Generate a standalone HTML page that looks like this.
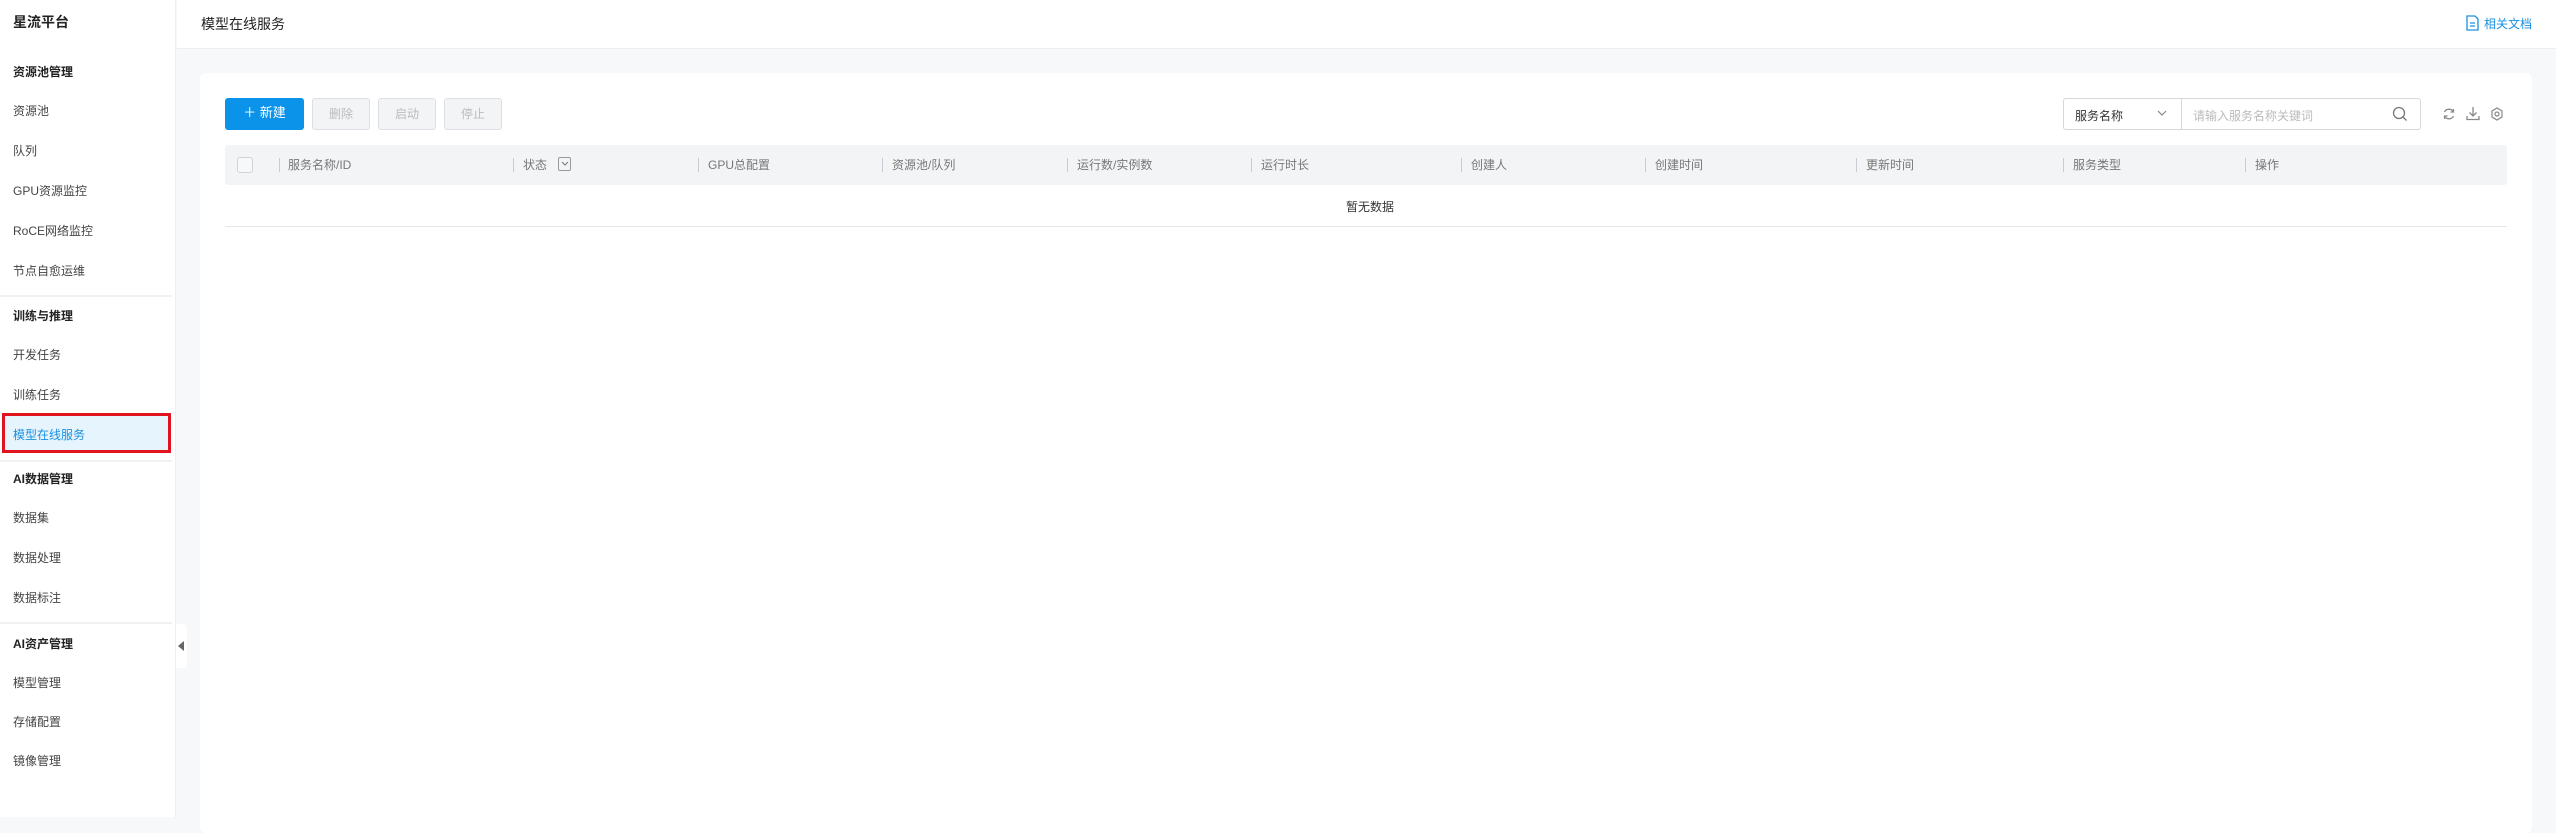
<!DOCTYPE html>
<html><head><meta charset="utf-8"><style>
*{margin:0;padding:0;box-sizing:border-box}
body{width:2556px;height:817px;overflow:hidden;background:#f7f8fa;font-family:"Liberation Sans","Noto Sans CJK SC",sans-serif;color:#333;position:relative;font-size:12px}
.abs{position:absolute}
#side{left:0;top:0;width:176px;height:817px;background:#fff;border-right:1px solid #eceef1}
.si{position:absolute;left:13px;font-size:12px;color:#444;line-height:16px}
.sh{font-weight:bold;color:#222}
.div{position:absolute;left:0;width:172px;height:2px;background:#f0f1f3}
#hdr{left:177px;top:0;width:2379px;height:49px;background:#fff;border-bottom:1px solid #eceef1}
#card{left:200px;top:73px;width:2332px;height:760px;background:#fff;border-radius:6px}
.btn{position:absolute;top:98px;height:32px;border-radius:3px;font-size:12px;line-height:30px;text-align:center}
.dis{background:#f3f4f6;border:1px solid #dcdfe4;color:#bbb}
.th{position:absolute;top:145px;left:225px;width:2282px;height:40px;background:#f3f4f6;border-radius:3px}
.col{position:absolute;top:158px;font-size:12px;color:#777;line-height:14px}
.sep{position:absolute;top:158px;width:1px;height:14px;background:#c8ccd2}
</style></head><body>
<div id="side" class="abs">
<div class="si sh" style="top:14px;font-size:14px">星流平台</div>
<div class="si sh" style="top:64px">资源池管理</div>
<div class="si" style="top:103px">资源池</div>
<div class="si" style="top:143px">队列</div>
<div class="si" style="top:183px">GPU资源监控</div>
<div class="si" style="top:223px">RoCE网络监控</div>
<div class="si" style="top:263px">节点自愈运维</div>
<div class="div" style="top:295px"></div>
<div class="si sh" style="top:308px">训练与推理</div>
<div class="si" style="top:347px">开发任务</div>
<div class="si" style="top:387px">训练任务</div>
<div class="abs" style="left:2px;top:413px;width:169px;height:40px;background:#e6f4fd;border:3px solid #e0141e"></div>
<div class="si" style="top:427px;color:#1a90e0">模型在线服务</div>
<div class="div" style="top:460px"></div>
<div class="si sh" style="top:471px">AI数据管理</div>
<div class="si" style="top:510px">数据集</div>
<div class="si" style="top:550px">数据处理</div>
<div class="si" style="top:590px">数据标注</div>
<div class="div" style="top:622px"></div>
<div class="si sh" style="top:636px">AI资产管理</div>
<div class="si" style="top:675px">模型管理</div>
<div class="si" style="top:714px">存储配置</div>
<div class="si" style="top:753px">镜像管理</div>
</div>
<div class="abs" style="left:176px;top:624px;width:11px;height:44px;background:#fff;border-radius:0 4px 4px 0"></div>
<div class="abs" style="left:178px;top:641px;width:0;height:0;border-top:5px solid transparent;border-bottom:5px solid transparent;border-right:6px solid #666"></div>
<div id="hdr" class="abs"></div>
<div class="abs" style="left:201px;top:14px;font-size:14px;color:#222">模型在线服务</div>
<svg class="abs" style="left:2466px;top:15px" width="13" height="16" viewBox="0 0 13 16"><path d="M1 1h8l3 3v11H1z" fill="none" stroke="#1a90e0" stroke-width="1.3"/><path d="M4 8h5M4 11h5" stroke="#1a90e0" stroke-width="1.2"/></svg>
<div class="abs" style="left:2484px;top:15px;font-size:12px;color:#1a90e0">相关文档</div>
<div id="card" class="abs"></div>
<div class="btn" style="left:225px;width:79px;background:#0a93e8;color:#fff;font-size:13px">＋ 新建</div>
<div class="btn dis" style="left:312px;width:58px">删除</div>
<div class="btn dis" style="left:378px;width:58px">启动</div>
<div class="btn dis" style="left:444px;width:58px">停止</div>
<div class="abs" style="left:2063px;top:98px;width:358px;height:32px;border:1px solid #d4d7dc;border-radius:3px"></div>
<div class="abs" style="left:2181px;top:99px;width:1px;height:30px;background:#d4d7dc"></div>
<div class="abs" style="left:2075px;top:107px;font-size:12px;color:#333">服务名称</div>
<svg class="abs" style="left:2156px;top:108px" width="12" height="10"><path d="M2 3l4 4 4-4" fill="none" stroke="#888" stroke-width="1.2"/></svg>
<div class="abs" style="left:2193px;top:107px;font-size:12px;color:#bbb">请输入服务名称关键词</div>
<svg class="abs" style="left:2392px;top:106px" width="16" height="16"><circle cx="7" cy="7" r="5.5" fill="none" stroke="#777" stroke-width="1.3"/><path d="M11 11l3.5 3.5" stroke="#777" stroke-width="1.3"/></svg>
<svg class="abs" style="left:2442px;top:107px" width="14" height="14"><path d="M11.5 5A5 5 0 0 0 2.5 5M2.5 9a5 5 0 0 0 9 0" fill="none" stroke="#888" stroke-width="1.3"/><path d="M11.5 2v3h-3M2.5 12V9h3" fill="none" stroke="#888" stroke-width="1.2"/></svg>
<svg class="abs" style="left:2466px;top:106px" width="14" height="15"><path d="M7 1v9M3.5 6.5L7 10l3.5-3.5M1 10v3.5h12V10" fill="none" stroke="#888" stroke-width="1.3"/></svg>
<svg class="abs" style="left:2490px;top:107px" width="14" height="14"><circle cx="7" cy="7" r="2" fill="none" stroke="#888" stroke-width="1.2"/><path d="M7 1l5 3v6l-5 3-5-3V4z" fill="none" stroke="#888" stroke-width="1.2"/></svg>
<div class="th"></div>
<div class="abs" style="left:237px;top:157px;width:16px;height:16px;border:1px solid #d0d3d8;border-radius:3px;background:#f7f8fa"></div>
<div class="sep" style="left:279px"></div><div class="col" style="left:288px">服务名称/ID</div>
<div class="sep" style="left:513px"></div><div class="col" style="left:523px">状态</div>
<div class="abs" style="left:558px;top:157px;width:13px;height:14px;border:1px solid #999;border-radius:2px"></div>
<svg class="abs" style="left:560px;top:160px" width="10" height="8"><path d="M2 2l3 3 3-3" fill="none" stroke="#777" stroke-width="1"/></svg>
<div class="sep" style="left:698px"></div><div class="col" style="left:708px">GPU总配置</div>
<div class="sep" style="left:882px"></div><div class="col" style="left:892px">资源池/队列</div>
<div class="sep" style="left:1067px"></div><div class="col" style="left:1077px">运行数/实例数</div>
<div class="sep" style="left:1251px"></div><div class="col" style="left:1261px">运行时长</div>
<div class="sep" style="left:1461px"></div><div class="col" style="left:1471px">创建人</div>
<div class="sep" style="left:1645px"></div><div class="col" style="left:1655px">创建时间</div>
<div class="sep" style="left:1856px"></div><div class="col" style="left:1866px">更新时间</div>
<div class="sep" style="left:2063px"></div><div class="col" style="left:2073px">服务类型</div>
<div class="sep" style="left:2245px"></div><div class="col" style="left:2255px">操作</div>
<div class="abs" style="left:1346px;top:198px;font-size:12px;color:#333">暂无数据</div>
<div class="abs" style="left:225px;top:226px;width:2282px;height:1px;background:#e4e6ea"></div>
</body></html>
